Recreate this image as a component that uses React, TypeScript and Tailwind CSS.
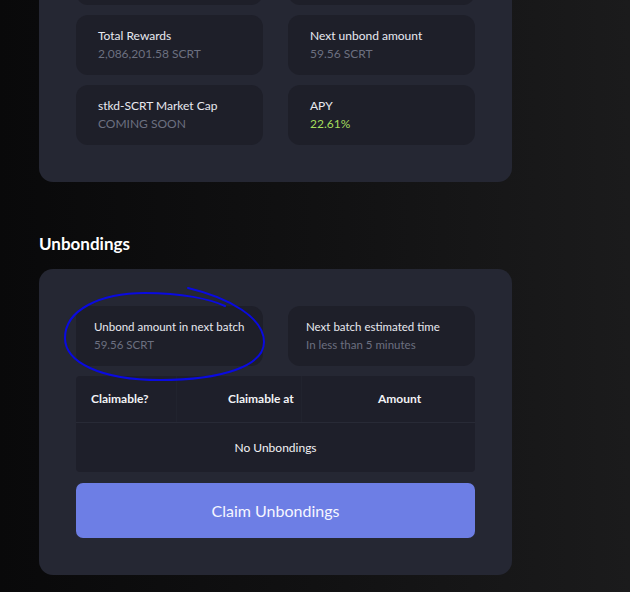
const font = { fontFamily: "Lato, 'Open Sans', sans-serif" };

interface StatProps {
  label: string;
  value: string;
  valueClass?: string;
  className?: string;
}

const StatCard: React.FC<StatProps> = ({ label, value, valueClass, className }) => (
  <div
    className={`h-[60px] rounded-[12px] bg-[#1e1f29] flex flex-col justify-center whitespace-nowrap ${
      className || "px-[22px] text-[12px]"
    }`}
  >
    <div className="leading-[18px] text-[#e8e9f0]">{label}</div>
    <div className={`leading-[18px] ${valueClass || "text-[#6c7080]"}`}>{value}</div>
  </div>
);

const stats = [
  { label: "Total Rewards", value: "2,086,201.58 SCRT" },
  { label: "Next unbond amount", value: "59.56 SCRT" },
  { label: "stkd-SCRT Market Cap", value: "COMING SOON" },
  { label: "APY", value: "22.61%", valueClass: "text-[#a4dd5c]" },
];

export default function App() {
  return (
    <div
      style={font}
      className="w-[630px] h-[592px] overflow-hidden bg-gradient-to-r from-[#09090a] via-[#111112] to-[#1b1b1c]"
    >
      <div className="ml-[39px] w-[473px]">
        <div className="-mt-[92px] rounded-[14px] bg-[#252733] p-[37px] grid grid-cols-2 gap-x-[25px] gap-y-[10px]">
          {/* first row sits above the fold */}
          <div className="h-[60px] rounded-[12px] bg-[#1e1f29]" />
          <div className="h-[60px] rounded-[12px] bg-[#1e1f29]" />
          {stats.map((s, i) => (
            <StatCard key={i} label={s.label} value={s.value} valueClass={s.valueClass} />
          ))}
        </div>

        <h2 className="mt-[50px] mb-[13px] text-[17px] leading-[24px] font-bold text-white">
          Unbondings
        </h2>

        <div className="relative rounded-[14px] bg-[#252733] p-[37px]">
          <div className="grid grid-cols-2 gap-x-[25px]">
            <StatCard className="px-[18px] text-[11.5px]" label="Unbond amount in next batch" value="59.56 SCRT" />
            <StatCard className="px-[18px] text-[11.5px]" label="Next batch estimated time" value="In less than 5 minutes" />
          </div>

          <div className="mt-[10px] rounded-[4px] bg-[#1e1f2a] text-[12px] font-bold text-[#f2f2f5]">
            <div className="grid grid-cols-[101px_125px_1fr] h-[47px] border-b border-[#282a36]">
              <div className="flex items-center pl-[15px] border-r border-[#21232e]">Claimable?</div>
              <div className="flex items-center pl-[51px] border-r border-[#21232e]">Claimable at</div>
              <div className="flex items-center pl-[76px]">Amount</div>
            </div>
            <div className="h-[49px] flex items-center justify-center font-normal">
              No Unbondings
            </div>
          </div>

          <button className="mt-[11px] w-full h-[55px] rounded-[7px] bg-[#6d7ee5] text-[16px] text-[#f6f6ff]">
            Claim Unbondings
          </button>

          <svg
            className="absolute left-0 top-0 pointer-events-none"
            width="300"
            height="140"
            viewBox="39 269 300 140"
            fill="none"
          >
            <path
              d="M188 288 C230 298 264 318 264 342 C264 366 222 380 160 380 C100 380 65 362 65 338 C65 310 100 293 145 293 C182 293 210 299 225 306"
              stroke="#0a0ae0"
              strokeWidth="2"
              strokeLinecap="round"
            />
          </svg>
        </div>
      </div>
    </div>
  );
}
